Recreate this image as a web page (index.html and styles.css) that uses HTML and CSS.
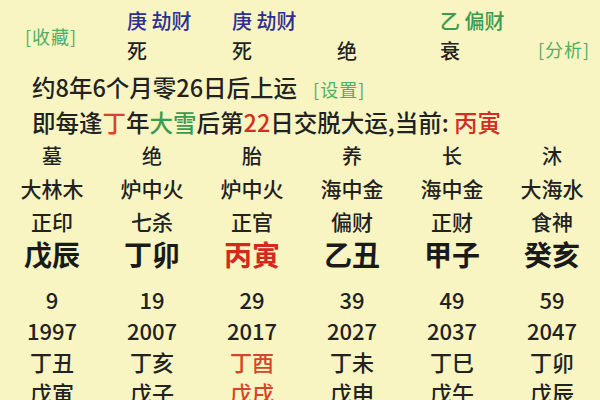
FILE: index.html
```html
<!DOCTYPE html>
<html lang="zh-CN">
<head>
<meta charset="utf-8">
<link rel="stylesheet" href="styles.css">
</head>
<body>
<div class="page">
  <div class="head">
    <div class="fav link">[收藏]</div>
    <div class="cell blue">庚 劫财</div>
    <div class="cell blue">庚 劫财</div>
    <div class="cell"></div>
    <div class="cell green">乙 偏财</div>
    <div class="cell"></div>
    <div class="cell">死</div>
    <div class="cell">死</div>
    <div class="cell">绝</div>
    <div class="cell">衰</div>
    <div class="cell ana link">[分析]</div>
  </div>
  <div class="info">
    <div class="line l1">约8年6个月零26日后上运<span class="link set">[设置]</span></div>
    <div class="line l2">即每逢<span class="orange">丁</span>年<span class="green">大雪</span>后第<span class="red">22</span>日交脱大运,当前: <span class="red">丙寅</span></div>
  </div>
  <div class="pillars">
    <div>墓</div><div>绝</div><div>胎</div><div>养</div><div>长</div><div>沐</div>
    <div>大林木</div><div>炉中火</div><div>炉中火</div><div>海中金</div><div>海中金</div><div>大海水</div>
    <div>正印</div><div>七杀</div><div>正官</div><div>偏财</div><div>正财</div><div>食神</div>
    <div class="big">戊辰</div><div class="big">丁卯</div><div class="big red">丙寅</div><div class="big">乙丑</div><div class="big">甲子</div><div class="big">癸亥</div>
  </div>
  <div class="luck">
    <div>9</div><div>19</div><div>29</div><div>39</div><div>49</div><div>59</div>
    <div>1997</div><div>2007</div><div>2017</div><div>2027</div><div>2037</div><div>2047</div>
    <div>丁丑</div><div>丁亥</div><div class="orange">丁酉</div><div>丁未</div><div>丁巳</div><div>丁卯</div>
    <div>戊寅</div><div>戊子</div><div class="orange">戊戌</div><div>戊申</div><div>戊午</div><div>戊辰</div>
  </div>
</div>
</body>
</html>
```
FILE: styles.css
```css
html, body {
  margin: 0;
  padding: 0;
}
body {
  width: 600px;
  height: 400px;
  overflow: hidden;
  background: #f8f5c3;
  font-family: "Noto Sans CJK SC", "Noto Sans", sans-serif;
  font-weight: 500;
  color: #222;
}
.page {
  width: 600px;
}
.head {
  display: grid;
  grid-template-columns: 127px 105px 105px 103px 98px 62px;
  grid-template-rows: 30px 30px;
  padding-top: 6px;
  font-size: 20px;
  line-height: 30px;
}
.fav {
  grid-row: 1 / span 2;
  grid-column: 1;
  align-self: center;
  padding-left: 25px;
}
.cell {
  white-space: nowrap;
}
.ana {
  line-height: 26px;
}
.link {
  color: #4fae63;
  font-size: 18px;
  font-weight: 400;
  letter-spacing: 1px;
}
.blue { color: #2d2f93; }
.green { color: #3c9b50; }
.red { color: #d42d22; }
.orange { color: #d5452a; }
.info {
  margin-top: 3px;
  padding-left: 32px;
  font-size: 23.5px;
  white-space: nowrap;
}
.l1 {
  height: 36px;
  line-height: 36px;
}
.l2 {
  height: 34px;
  line-height: 34px;
}
.set {
  margin-left: 16px;
}
.pillars, .luck {
  display: grid;
  grid-template-columns: repeat(6, 100px);
  margin-left: 2px;
  text-align: center;
  font-size: 21px;
}
.pillars {
  grid-auto-rows: 33px;
  line-height: 33px;
}
.pillars > div:nth-child(-n+6) {
  font-size: 20px;
}
.big {
  font-size: 28px;
  font-weight: 700;
  color: #1a1a1a;
}
.big.red { color: #d42a1e; }
.luck {
  margin-top: 13px;
  grid-auto-rows: 31px;
  line-height: 31px;
  font-size: 22px;
}
```
